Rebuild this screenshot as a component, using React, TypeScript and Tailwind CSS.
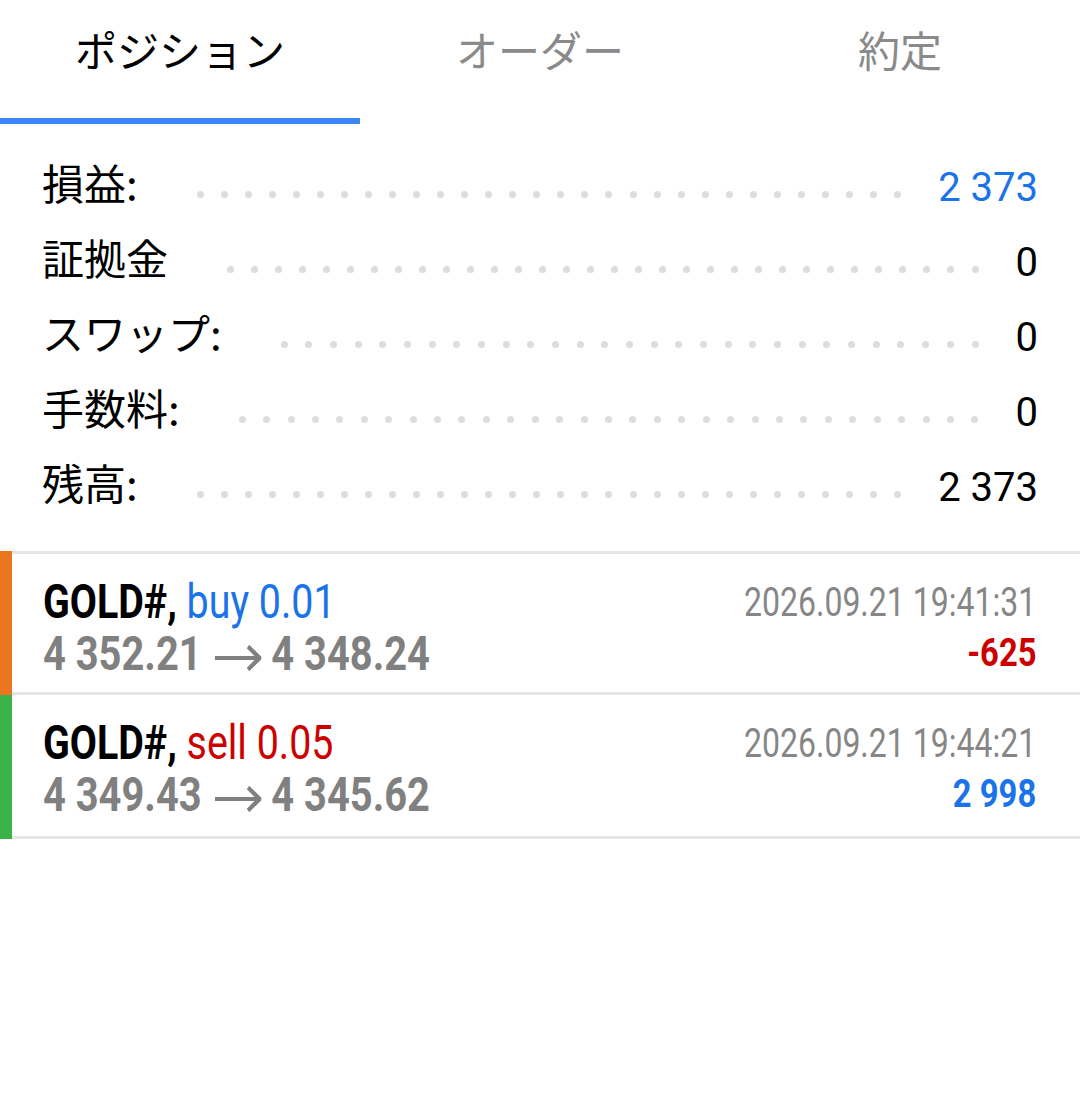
import React from 'react';

const JP = "font-['Noto_Sans_CJK_JP',sans-serif]";
const RB = "font-['Roboto','Noto_Sans_CJK_JP',sans-serif]";

interface SummaryRow {
  label: string;
  value: string;
  blue?: boolean;
}

interface Position {
  side: 'buy' | 'sell';
  volume: string;
  open: string;
  current: string;
  time: string;
  profit: string;
}

const summary: SummaryRow[] = [
  { label: '損益:', value: '2 373', blue: true },
  { label: '証拠金', value: '0' },
  { label: 'スワップ:', value: '0' },
  { label: '手数料:', value: '0' },
  { label: '残高:', value: '2 373' },
];

const positions: Position[] = [
  {
    side: 'buy',
    volume: '0.01',
    open: '4 352.21',
    current: '4 348.24',
    time: '2026.09.21 19:41:31',
    profit: '-625',
  },
  {
    side: 'sell',
    volume: '0.05',
    open: '4 349.43',
    current: '4 345.62',
    time: '2026.09.21 19:44:21',
    profit: '2 998',
  },
];

function Dots() {
  return (
    <div className="ml-[59px] mr-[37px] mt-[14px] flex h-[7px] min-w-0 flex-1 flex-wrap justify-between gap-x-[17px] overflow-hidden">
      {Array.from({ length: 48 }, (_, i) => (
        <span key={i} className="h-[7px] w-[7px] flex-none rounded-full bg-[#dddddd]" />
      ))}
    </div>
  );
}

// long arrow between open and current price (drawn pre-scale, parent squeezes it)
function Arrow() {
  return (
    <svg width="56" height="38" viewBox="0 0 56 38" className="ml-[16px] mr-[12px] inline-block">
      <path d="M0 20H52" stroke="#808080" strokeWidth="4" fill="none" />
      <path d="M40 8.5L54 20L40 31.5" stroke="#808080" strokeWidth="4.6" fill="none" />
    </svg>
  );
}

function Tabs() {
  const tabs = ['ポジション', 'オーダー', '約定'];
  return (
    <div>
      <div className="flex h-[118px]">
        {tabs.map((t, i) => (
          <div
            key={t}
            className={`flex flex-1 items-center justify-center pb-[20px] text-[42px] leading-none ${JP} ${
              i === 0 ? 'text-black' : 'text-[#8a8a8a]'
            }`}
          >
            {t}
          </div>
        ))}
      </div>
      <div className="h-[6px] w-1/3 bg-[#3a86f4]" />
    </div>
  );
}

function PositionCard({ p, first }: { p: Position; first?: boolean }) {
  const isBuy = p.side === 'buy';
  return (
    <div className="flex">
      <div className={`w-[12px] flex-none ${isBuy ? 'bg-[#ec7620]' : 'bg-[#3bb34a]'}`} />
      <div
        className={`flex h-[144px] flex-1 justify-between border-b-[3px] border-[#e6e6e6] pl-[31px] pr-[44px] ${RB} ${
          first ? 'border-t-[3px]' : ''
        }`}
      >
        <div className="pt-[22px]">
          <div className="origin-left scale-x-[0.82] whitespace-nowrap text-[48px] leading-[52px]">
            <span className="font-bold text-black">GOLD#,</span>{' '}
            <span className={isBuy ? 'text-[#1a73e8]' : 'text-[#cc0000]'}>
              {p.side} {p.volume}
            </span>
          </div>
          <div className="origin-left scale-x-[0.83] whitespace-nowrap text-[48px] font-bold leading-[52px] text-[#808080]">
            {p.open}
            <Arrow />
            {p.current}
          </div>
        </div>
        <div className="flex flex-col items-end pt-[26px]">
          <div className="origin-right scale-x-[0.8] whitespace-nowrap text-[40px] leading-[46px] text-[#868686]">
            {p.time}
          </div>
          <div
            className={`origin-right scale-x-[0.84] whitespace-nowrap text-[39px] font-bold leading-[54px] ${
              isBuy ? 'text-[#cc0000]' : 'text-[#1a73e8]'
            }`}
          >
            {p.profit}
          </div>
        </div>
      </div>
    </div>
  );
}

export default function App() {
  return (
    <div className="h-[1096px] w-[1080px] overflow-hidden bg-white">
      <Tabs />
      <div className="pb-[25px] pl-[42px] pr-[42px] pt-[26px]">
        {summary.map((r) => (
          <div key={r.label} className="flex h-[75px] items-center">
            <span className={`mb-[12px] flex-none text-[42px] leading-none text-black ${JP}`}>{r.label}</span>
            <Dots />
            <span
              className={`flex-none text-[40px] leading-none ${RB} ${
                r.blue ? 'text-[#1a73e8]' : 'text-black'
              }`}
            >
              {r.value}
            </span>
          </div>
        ))}
      </div>
      <div className="mt-px">
        {positions.map((p, i) => (
          <PositionCard key={p.time} p={p} first={i === 0} />
        ))}
      </div>
    </div>
  );
}
